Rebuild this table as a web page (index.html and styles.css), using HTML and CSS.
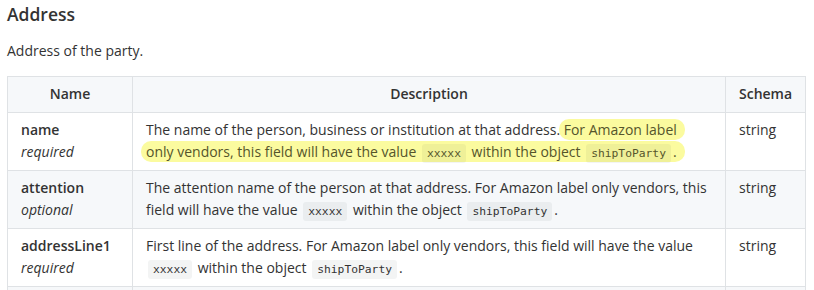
FILE: index.html
```html
<!DOCTYPE html>
<html lang="en">
  <head>
    <meta charset="utf-8" />
    <title>Address - Schema</title>
    <link rel="stylesheet" href="styles.css">
  </head>
  <body>
    <div class="model">
      <h3 class="model-title">Address</h3>
      <p class="model-desc">Address of the party.</p>

      <table class="props">
        <colgroup>
          <col class="col-name" />
          <col class="col-desc" />
          <col class="col-schema" />
        </colgroup>
        <thead>
          <tr>
            <th>Name</th>
            <th>Description</th>
            <th>Schema</th>
          </tr>
        </thead>
        <tbody>
          <tr>
            <td><span class="prop-name">name</span><br><em>required</em></td>
            <td>The name of the person, business or institution at that address. <mark class="hl">For Amazon label<br>only vendors, this field will have the value <code>xxxxx</code> within the object <code>shipToParty</code>.</mark></td>
            <td>string</td>
          </tr>
          <tr>
            <td><span class="prop-name">attention</span><br><em>optional</em></td>
            <td>The attention name of the person at that address. For Amazon label only vendors, this field will have the value <code>xxxxx</code> within the object <code>shipToParty</code>.</td>
            <td>string</td>
          </tr>
          <tr>
            <td><span class="prop-name">addressLine1</span><br><em>required</em></td>
            <td>First line of the address. For Amazon label only vendors, this field will have the value <code>xxxxx</code> within the object <code>shipToParty</code>.</td>
            <td>string</td>
          </tr>
          <tr>
            <td><span class="prop-name">addressLine2</span><br><em>optional</em></td>
            <td>Additional address information, if required.</td>
            <td>string</td>
          </tr>
        </tbody>
      </table>
    </div>
  </body>
</html>
```
FILE: styles.css
```css
* {
  box-sizing: border-box;
}

body {
  margin: 0;
  font-family: 'Open Sans', 'Noto Sans', sans-serif;
  font-size: 14px;
  line-height: 22px;
  color: #333;
  background: #fff;
}

.model {
  padding: 2px 8px 0 7px;
}

.model-title {
  margin: 0;
  font-size: 17.5px;
  line-height: 24px;
  font-weight: 600;
  color: #333;
}

.model-desc {
  margin: 14px 0 14px;
}

.props {
  width: 100%;
  table-layout: fixed;
  border-collapse: collapse;
  border-spacing: 0;
}

.col-name {
  width: 125px;
}

.col-schema {
  width: 80px;
}

.props th,
.props td {
  padding: 6px 13px 7px;
  border: 1px solid #dfe2e5;
  vertical-align: top;
  text-align: left;
}

.props th {
  font-weight: 600;
  text-align: center;
}

.props thead tr,
.props tbody tr:nth-child(2n) {
  background: #f6f8fa;
}

.prop-name {
  font-weight: 600;
}

.props em {
  font-style: italic;
}

code {
  font-family: 'DejaVu Sans Mono', 'Liberation Mono', monospace;
  font-size: 11.3px;
  line-height: 1;
  padding: 3px 5px;
  margin: 0 2px;
  background: rgba(27, 31, 35, 0.05);
  border-radius: 3px;
}

/* marker style highlight over the text */
.hl {
  color: #55552b;
  background: #fbfb9f;
  padding: 1px 8px 1px 5px;
  margin-left: -5px;
  border-radius: 10px;
  -webkit-box-decoration-break: clone;
  box-decoration-break: clone;
}
```
